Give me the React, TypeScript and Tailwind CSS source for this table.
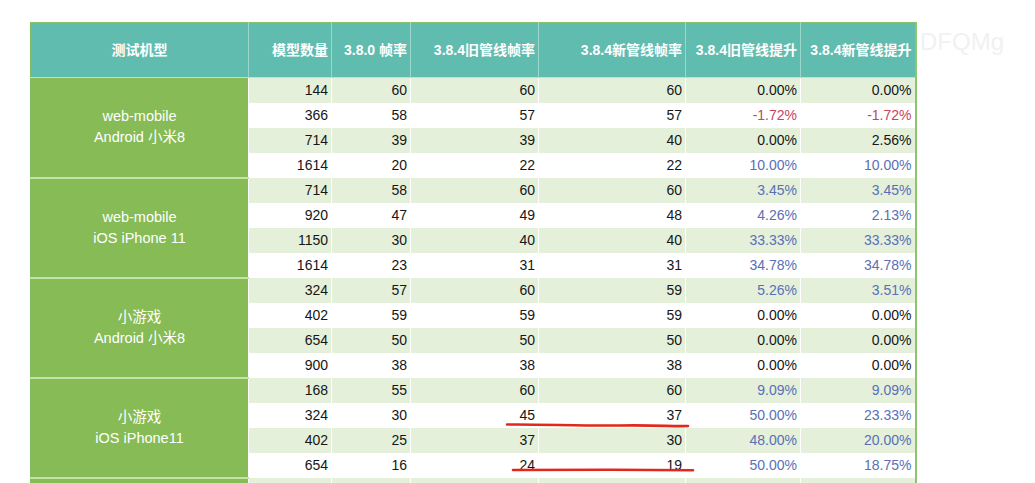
const groups = [
    {
        label: ['web-mobile', 'Android 小米8'],
        rows: [
            ['144', '60', '60', '60', '0.00%', '0.00%'],
            ['366', '58', '57', '57', '-1.72%', '-1.72%'],
            ['714', '39', '39', '40', '0.00%', '2.56%'],
            ['1614', '20', '22', '22', '10.00%', '10.00%'],
        ],
    },
    {
        label: ['web-mobile', 'iOS iPhone 11'],
        rows: [
            ['714', '58', '60', '60', '3.45%', '3.45%'],
            ['920', '47', '49', '48', '4.26%', '2.13%'],
            ['1150', '30', '40', '40', '33.33%', '33.33%'],
            ['1614', '23', '31', '31', '34.78%', '34.78%'],
        ],
    },
    {
        label: ['小游戏', 'Android 小米8'],
        rows: [
            ['324', '57', '60', '59', '5.26%', '3.51%'],
            ['402', '59', '59', '59', '0.00%', '0.00%'],
            ['654', '50', '50', '50', '0.00%', '0.00%'],
            ['900', '38', '38', '38', '0.00%', '0.00%'],
        ],
    },
    {
        label: ['小游戏', 'iOS iPhone11'],
        rows: [
            ['168', '55', '60', '60', '9.09%', '9.09%'],
            ['324', '30', '45', '37', '50.00%', '23.33%'],
            ['402', '25', '37', '30', '48.00%', '20.00%'],
            ['654', '16', '24', '19', '50.00%', '18.75%'],
        ],
    },
    {
        label: ['', ''],
        rows: [['', '', '', '', '', '']],
    },
];

const headers = ['模型数量', '3.8.0 帧率', '3.8.4旧管线帧率', '3.8.4新管线帧率', '3.8.4旧管线提升', '3.8.4新管线提升'];

const pctColor = (v: string) => {
    if (v.startsWith('-')) return 'text-[#c9435e]';
    if (v === '0.00%' || v === '2.56%' || v === '') return 'text-[#161616]';
    return 'text-[#5a6fb6]';
};

const App: React.FC = () => {
    return (
        <div
            className="relative w-[1035px] h-[483px] overflow-hidden bg-white"
            style={{ fontFamily: '"Liberation Sans", "Noto Sans CJK SC", sans-serif' }}
        >
            {/* faint watermark to the right of the table */}
            <div className="absolute left-[920px] top-[24px] text-[24px] text-[#f1f1f1] select-none">DFQMg</div>
            <div className="relative pl-[30px] pt-[22px]">
                <table className="table-fixed border-collapse w-[885px] border-l border-l-[#7cbd5f] border-r-2 border-r-[#8dc56f] border-t border-t-[#86c46a]">
                    <colgroup>
                        <col className="w-[218px]" />
                        <col className="w-[83px]" />
                        <col className="w-[79px]" />
                        <col className="w-[128px]" />
                        <col className="w-[147px]" />
                        <col className="w-[115px]" />
                        <col className="w-[115px]" />
                    </colgroup>
                    <thead>
                        <tr className="h-[55px] bg-[#61bcb0] text-white text-[14px] font-semibold border-b border-b-[#b8e2d3]">
                            <th className="text-center font-semibold border-r border-r-[#9bd6cb]">测试机型</th>
                            {headers.map((h) => (
                                <th key={h} className="text-right pr-[3px] font-semibold border-r border-r-[#9bd6cb] whitespace-nowrap">
                                    {h}
                                </th>
                            ))}
                        </tr>
                    </thead>
                    <tbody>
                        {groups.map((g, gi) =>
                            g.rows.map((r, ri) => (
                                <tr key={`${gi}-${ri}`} className={`h-[25px] text-[14px] ${ri % 2 === 0 ? 'bg-[#e4f0da]' : 'bg-white'}`}>
                                    {ri === 0 && (
                                        <td
                                            rowSpan={g.rows.length}
                                            className="bg-[#86bb56] text-white text-[14.5px] text-center align-middle leading-[21px] border-b-2 border-b-[#c3e2a8] border-r border-r-white"
                                        >
                                            <div>{g.label[0]}</div>
                                            <div>{g.label[1]}</div>
                                        </td>
                                    )}
                                    {r.map((c, ci) => (
                                        <td
                                            key={ci}
                                            className={`text-right pr-[3px] border-r border-r-white ${ci >= 4 ? pctColor(c) : 'text-[#161616]'}`}
                                        >
                                            {c}
                                        </td>
                                    ))}
                                </tr>
                            ))
                        )}
                    </tbody>
                </table>
            </div>
            <svg className="absolute left-0 top-0 pointer-events-none" width="1035" height="483" viewBox="0 0 1035 483">
                <path d="M507 424.5 C540 424, 580 426, 620 425.5 S670 426.5, 688 426" stroke="#e0281c" strokeWidth="2.6" fill="none" strokeLinecap="round" />
                <path d="M513 470 C560 469.5, 640 469.8, 693 470.2" stroke="#e0281c" strokeWidth="2.6" fill="none" strokeLinecap="round" />
            </svg>
        </div>
    );
};

export default App;
